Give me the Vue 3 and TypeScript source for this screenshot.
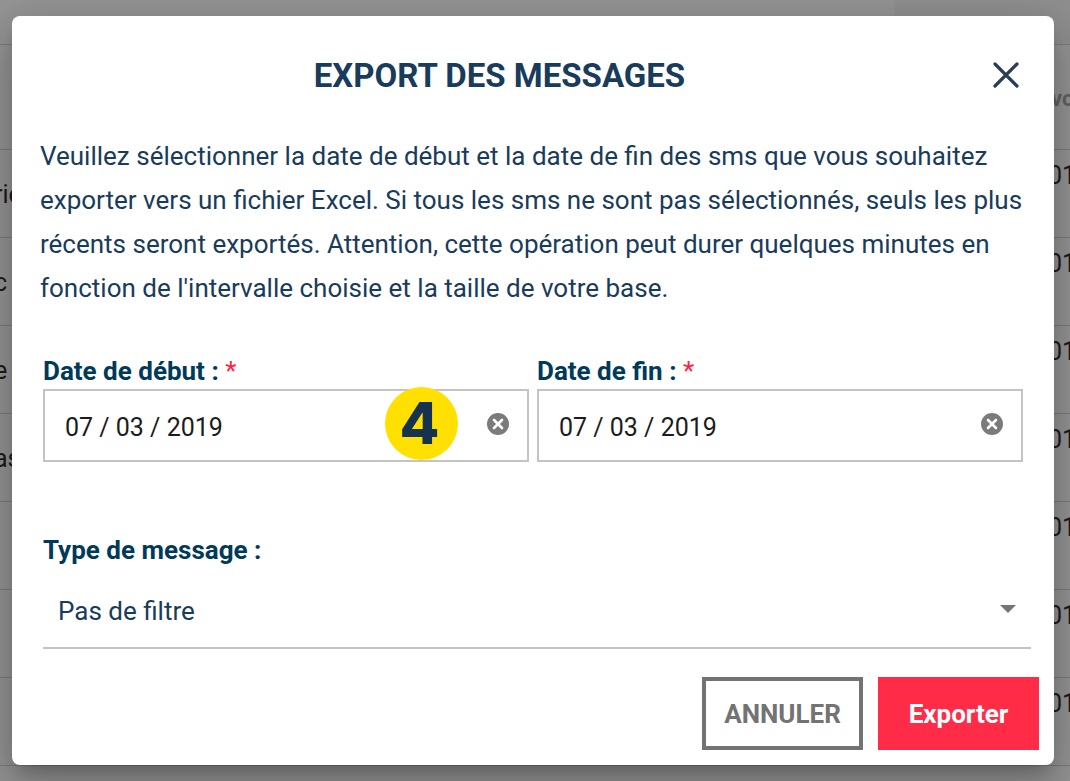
<script setup lang="ts">
import { ref } from 'vue'

interface Row {
  name: string
  date: string
}

const rows: Row[] = [
  { name: 'rie', date: '01' },
  { name: 'c', date: '01' },
  { name: 'e', date: '01' },
  { name: 'as', date: '01' },
  { name: '', date: '01' },
  { name: '', date: '01' },
  { name: '', date: '01' },
]

const open = ref(true)
const start = ref('07 / 03 / 2019')
const end = ref('07 / 03 / 2019')
const kind = ref('none')

function close() {
  open.value = false
}
</script>

<template>
  <div class="page">
    <div class="backdrop">
      <div class="toolbar"><div class="toolbar-end"></div></div>
      <table class="list">
        <thead>
          <tr>
            <th></th>
            <th class="date">vo</th>
          </tr>
        </thead>
        <tbody>
          <tr v-for="(row, i) in rows" :key="i">
            <td class="name">{{ row.name }}</td>
            <td class="date">{{ row.date }}</td>
          </tr>
        </tbody>
      </table>
    </div>

    <div v-if="open" class="dialog" role="dialog" aria-modal="true" aria-labelledby="dialog-title">
      <header class="header">
        <h1 id="dialog-title">EXPORT DES MESSAGES</h1>
        <button type="button" class="close" aria-label="Fermer" @click="close">
          <svg width="28" height="28" viewBox="0 0 28 28">
            <path d="M3 3L25 25M25 3L3 25" fill="none" stroke="#2a3d52" stroke-width="3.2" stroke-linecap="round" />
          </svg>
        </button>
      </header>

      <p class="intro">
        Veuillez sélectionner la date de début et la date de fin des sms que vous souhaitez
        exporter vers un fichier Excel. Si tous les sms ne sont pas sélectionnés, seuls les plus
        récents seront exportés. Attention, cette opération peut durer quelques minutes en
        fonction de l'intervalle choisie et la taille de votre base.
      </p>

      <form @submit.prevent="close">
        <div class="dates">
          <div class="field">
            <label for="start">Date de début : <span class="required">*</span></label>
            <div class="box">
              <input id="start" v-model="start" type="text" />
              <button type="button" class="clear" aria-label="Effacer la date de début" @click="start = ''">
                <svg width="22" height="22" viewBox="0 0 22 22">
                  <circle cx="11" cy="11" r="11" fill="#7b7b7b" />
                  <path d="M7 7L15 15M15 7L7 15" fill="none" stroke="#fff" stroke-width="2.6" stroke-linecap="round" />
                </svg>
              </button>
              <span class="badge">4</span>
            </div>
          </div>
          <div class="field">
            <label for="end">Date de fin : <span class="required">*</span></label>
            <div class="box">
              <input id="end" v-model="end" type="text" />
              <button type="button" class="clear" aria-label="Effacer la date de fin" @click="end = ''">
                <svg width="22" height="22" viewBox="0 0 22 22">
                  <circle cx="11" cy="11" r="11" fill="#7b7b7b" />
                  <path d="M7 7L15 15M15 7L7 15" fill="none" stroke="#fff" stroke-width="2.6" stroke-linecap="round" />
                </svg>
              </button>
            </div>
          </div>
        </div>

        <div class="kind">
          <label for="kind">Type de message :</label>
          <div class="select">
            <select id="kind" v-model="kind">
              <option value="none">Pas de filtre</option>
            </select>
            <svg class="arrow" width="16" height="8" viewBox="0 0 16 8">
              <path d="M0 0H16L8 8Z" fill="#757575" />
            </svg>
          </div>
        </div>

        <footer class="actions">
          <button type="button" class="cancel" @click="close">ANNULER</button>
          <button type="submit" class="submit">Exporter</button>
        </footer>
      </form>
    </div>
  </div>
</template>

<style>
body {
  margin: 0;
  background: #949494;
}
</style>

<style scoped>
* {
  box-sizing: border-box;
}

.page {
  position: relative;
  min-height: 100vh;
  padding: 16px 16px 16px 12px;
  overflow: hidden;
  font-family: Roboto, sans-serif;
  font-size: 26px;
  color: #193b5c;
}

.backdrop {
  position: absolute;
  inset: 0;
  overflow: hidden;
  color: #1c1c1c;
}

.toolbar {
  display: flex;
  justify-content: flex-end;
  height: 45px;
  border-bottom: 1px solid #7c7c7c;
}

.toolbar-end {
  width: 176px;
  background: #8f8f8f;
}

.list {
  width: calc(100% + 6px);
  margin-left: -6px;
  border-collapse: collapse;
  table-layout: fixed;
}

.list th,
.list td {
  height: 88px;
  padding: 0 0 36px;
  border-bottom: 1px solid #7c7c7c;
  text-align: left;
  font-size: 25px;
}

.list th {
  height: 104px;
  padding: 4px 0 0 3px;
  font-size: 22px;
  color: #616161;
}

.list .name {
  padding: 3px 0 0;
}

.list .date {
  width: 22px;
}

.dialog {
  position: relative;
  background: #fff;
  border-radius: 8px;
  box-shadow:
    0 11px 15px -7px rgba(0, 0, 0, 0.2),
    0 24px 38px 3px rgba(0, 0, 0, 0.14),
    0 9px 46px 8px rgba(0, 0, 0, 0.12);
}

.header {
  display: flex;
  align-items: center;
  height: 118px;
  padding: 0 24px 0 5px;
}

h1 {
  flex: 1;
  margin: 0;
  text-align: center;
  font-size: 33px;
  font-weight: 700;
}

button {
  padding: 0;
  border: 0;
  background: none;
  font: inherit;
  cursor: pointer;
}

.close {
  display: grid;
  place-items: center;
  width: 48px;
  height: 48px;
}

.intro {
  margin: 0 28px;
  line-height: 44px;
}

.dates {
  display: grid;
  grid-template-columns: 1fr 1fr;
  gap: 8px;
  margin: 44px 31px 0;
}

label {
  display: block;
  line-height: 35px;
  font-weight: 700;
  color: #003a5a;
}

.required {
  font-weight: 400;
  color: #ff1f44;
}

.box {
  position: relative;
  display: flex;
  align-items: center;
  height: 73px;
  padding-bottom: 3px;
  border: 2px solid #c4c4c4;
}

.box input {
  flex: 1;
  min-width: 0;
  height: 100%;
  padding: 6px 0 0 20px;
  border: 0;
  outline: 0;
  background: none;
  font: inherit;
  font-size: 25px;
  color: #1c1c1c;
}

.clear {
  width: 22px;
  height: 22px;
  margin: 0 18px 0 0;
}

svg {
  display: block;
}

.badge {
  position: absolute;
  top: -4px;
  right: 69px;
  display: grid;
  place-items: center;
  width: 73px;
  height: 73px;
  padding-right: 4px;
  border-radius: 50%;
  background: #ffe000;
  font-family: Inter, sans-serif;
  font-size: 58px;
  font-weight: 800;
  line-height: 73px;
  color: #15324f;
}

.kind {
  margin: 71px 23px 0 31px;
}

.select {
  position: relative;
  border-bottom: 2px solid #c4c4c4;
}

select {
  display: block;
  width: 100%;
  height: 79px;
  padding: 6px 48px 0 15px;
  border: 0;
  outline: 0;
  appearance: none;
  background: none;
  font: inherit;
  color: inherit;
}

.arrow {
  position: absolute;
  top: 37px;
  right: 15px;
  pointer-events: none;
}

.actions {
  display: flex;
  justify-content: flex-end;
  gap: 15px;
  padding: 28px 15px 15px;
}

.cancel,
.submit {
  width: 161px;
  height: 73px;
  font-size: 26px;
  font-weight: 700;
}

.cancel {
  border: 4px solid #737373;
  color: #737373;
}

.submit {
  background: #ff2b47;
  color: #fff;
}
</style>
